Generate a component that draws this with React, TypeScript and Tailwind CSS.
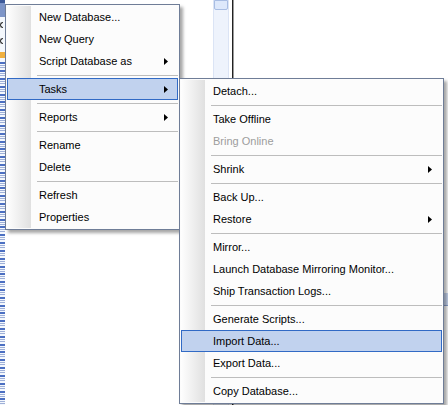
type Item = {
  label?: string;
  sep?: boolean;
  sub?: boolean;
  active?: boolean;
  disabled?: boolean;
};

const dbMenu: Item[] = [
  { label: 'New Database...' },
  { label: 'New Query' },
  { label: 'Script Database as', sub: true },
  { sep: true },
  { label: 'Tasks', sub: true, active: true },
  { sep: true },
  { label: 'Reports', sub: true },
  { sep: true },
  { label: 'Rename' },
  { label: 'Delete' },
  { sep: true },
  { label: 'Refresh' },
  { label: 'Properties' },
];

const tasksMenu: Item[] = [
  { label: 'Detach...' },
  { sep: true },
  { label: 'Take Offline' },
  { label: 'Bring Online', disabled: true },
  { sep: true },
  { label: 'Shrink', sub: true },
  { sep: true },
  { label: 'Back Up...' },
  { label: 'Restore', sub: true },
  { sep: true },
  { label: 'Mirror...' },
  { label: 'Launch Database Mirroring Monitor...' },
  { label: 'Ship Transaction Logs...' },
  { sep: true },
  { label: 'Generate Scripts...' },
  { label: 'Import Data...', active: true },
  { label: 'Export Data...' },
  { sep: true },
  { label: 'Copy Database...' },
];

function Arrow() {
  return (
    <svg width="4" height="7" viewBox="0 0 4 7" className="ml-auto mr-[10px] shrink-0">
      <path d="M0 0 L4 3.5 L0 7 Z" fill="#000" />
    </svg>
  );
}

function MenuRow({ item }: { item: Item }) {
  if (item.sep) {
    return (
      <div className="flex h-[6px]">
        <div className="w-[24px] bg-gradient-to-r from-[#fefefe] to-[#e0e0e0]" />
        <div className="flex-1 ml-[6px] flex items-center">
          <div className="h-px w-full bg-[#bdbdbd]" />
        </div>
      </div>
    );
  }
  return (
    <div
      className={
        item.active
          ? 'flex h-[22px] items-center bg-[#c1d2ee] shadow-[inset_0_0_0_1px_#316ac5]'
          : 'flex h-[22px] items-center'
      }
    >
      <div
        className={
          item.active
            ? 'w-[24px] h-full'
            : 'w-[24px] h-full bg-gradient-to-r from-[#fefefe] to-[#e0e0e0]'
        }
      />
      <span
        className={
          item.disabled
            ? 'pl-[8px] text-[11px] leading-none text-[#9d9d9d] whitespace-nowrap'
            : 'pl-[8px] text-[11px] leading-none text-black whitespace-nowrap'
        }
      >
        {item.label}
      </span>
      {item.sub && <Arrow />}
    </div>
  );
}

// strip of the object explorer tree, mostly hidden behind the menus
function TreeColumn() {
  const rows = Array.from({ length: 44 });
  return (
    <div className="w-[5px] h-full flex flex-col bg-[#f4f8fd] overflow-hidden">
      <div className="h-[3px] bg-[#3d5a99]" />
      <div className="h-[14px] bg-[#4a6bb0] opacity-70" />
      <div className="h-[6px]" />
      <div className="h-[6px] w-[3px] rounded-l-full border border-[#333] border-r-0" />
      <div className="h-[10px]" />
      <div className="h-[6px] w-[3px] rounded-l-full border border-[#333] border-r-0" />
      <div className="h-[8px]" />
      <div className="h-[6px] bg-[#f0b040]" />
      <div className="h-[4px]" />
      {rows.map((_, i) => (
        <div key={i} className="h-[8px] flex flex-col gap-px pt-px">
          <div className="h-[2px] bg-[#4b6fc2]" />
          <div className="h-px bg-[#9fb0d8]" />
          <div className="h-px bg-[#9fb0d8]" />
        </div>
      ))}
    </div>
  );
}

function Menu({ items, className }: { items: Item[]; className: string }) {
  return (
    <div
      className={
        'absolute bg-[#fcfcfc] border border-[#6f7d97] p-px shadow-[3px_3px_3px_rgba(0,0,0,0.35)] ' +
        className
      }
    >
      {items.map((item, i) => (
        <MenuRow key={i} item={item} />
      ))}
    </div>
  );
}

export default function App() {
  return (
    <div
      className="relative w-[448px] h-[405px] overflow-hidden bg-white"
      style={{ fontFamily: '"Liberation Sans", Arial, sans-serif' }}
    >
      <div className="flex h-full">
        <TreeColumn />
        <div className="w-[208px] h-full bg-white" />
        <div className="w-[16px] h-full bg-[#eef3fc] border-x border-[#dbe4f5] flex flex-col">
          <div className="h-[10px] bg-[#dde8fb] border border-[#a8bde3] rounded-b-[2px]" />
        </div>
        <div className="w-[3px] h-full bg-white" />
        <div className="w-px h-full bg-[#222]" />
        <div className="w-px h-full bg-[#9a9a9a]" />
        <div className="flex-1 h-full flex flex-col">
          <div className="h-[293px]" />
          <div className="h-[13px] bg-[#c9d7f0] border-b border-[#8aa0cc]" />
        </div>
      </div>

      <Menu items={dbMenu} className="left-[5px] top-[4px] w-[175px]" />
      <Menu items={tasksMenu} className="left-[179px] top-[78px] w-[265px]" />
    </div>
  );
}
